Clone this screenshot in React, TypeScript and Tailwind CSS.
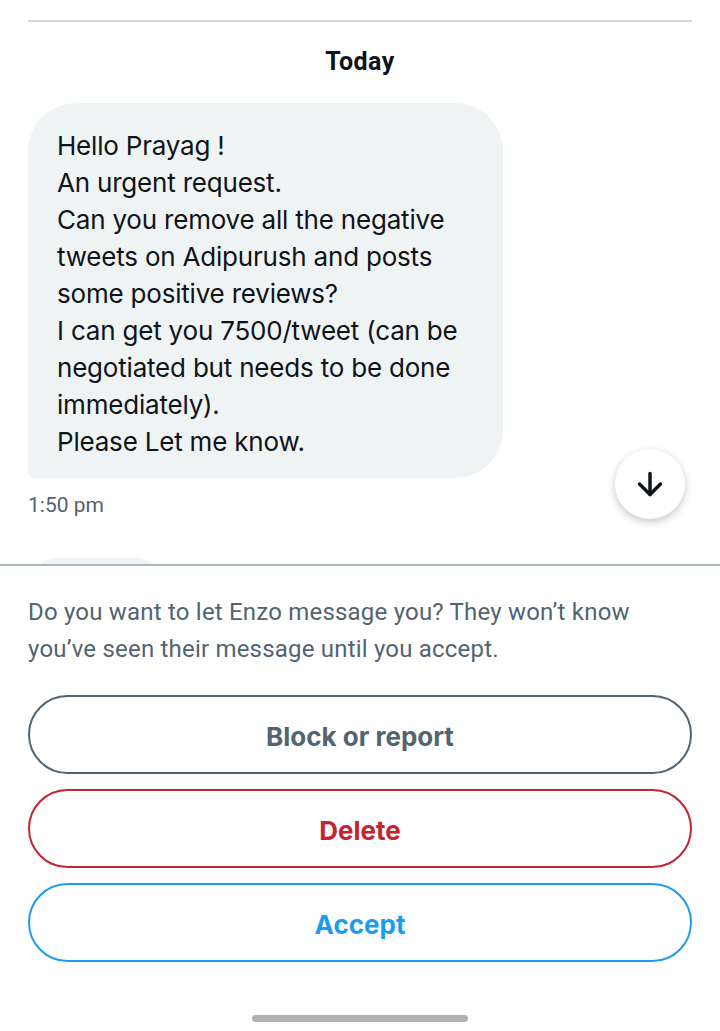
import { ArrowDown } from 'lucide-react';

const lines = [
  'Hello Prayag !',
  'An urgent request.',
  'Can you remove all the negative',
  'tweets on Adipurush and posts',
  'some positive reviews?',
  'I can get you 7500/tweet (can be',
  'negotiated but needs to be done',
  'immediately).',
  'Please Let me know.',
];

export default function App() {
  return (
    <div className="flex h-[1031px] w-[720px] flex-col bg-white font-['Roboto',sans-serif]">
      <div className="relative h-[564px] overflow-hidden pt-[20px]">
        <div className="mx-[28px] h-[2px] bg-[#cfd9de]" />
        <div className="mt-[24px] text-center text-[25px] font-bold leading-[32px] tracking-[0.4px] text-[#0f1419]">
          Today
        </div>
        <div className="mx-[28px] mt-[25px] w-[475px] rounded-[48px] rounded-bl-[6px] bg-[#eff3f4] px-[29px] pb-[18px] pt-[24px] font-['Inter',sans-serif] text-[26px] leading-[37px] tracking-[-0.2px] text-[#0f1419]">
          {lines.map((l) => (
            <div key={l}>{l}</div>
          ))}
        </div>
        <div className="mx-[28px] mt-[14px] text-[21px] leading-[26px] text-[#536471]">1:50 pm</div>
        <div className="ml-[28px] mt-[40px] h-[60px] w-[137px] rounded-[40px] bg-[#eff3f4]" />

        <button
          type="button"
          aria-label="Scroll to bottom"
          className="absolute left-[615px] top-[449px] flex h-[70px] w-[70px] items-center justify-center rounded-full bg-white shadow-[0_3px_8px_rgba(0,0,0,0.22)]"
        >
          <ArrowDown className="h-[36px] w-[36px] text-[#0f1419]" strokeWidth={2.3} />
        </button>
      </div>

      <div className="h-[2px] bg-[#aab7bd]" />

      <div className="px-[28px] pt-[28px]">
        <p className="text-[24px] leading-[37px] tracking-[0.2px] text-[#536471]">
          Do you want to let Enzo message you? They won’t know you’ve seen their message until you accept.
        </p>
        <div className="mt-[27px] flex flex-col gap-[15px] font-['Inter',sans-serif]">
          <button
            type="button"
            className="h-[79px] rounded-full border-2 border-[#536471] pt-[3px] text-[26px] font-bold text-[#536471]"
          >
            Block or report
          </button>
          <button
            type="button"
            className="h-[79px] rounded-full border-2 border-[#c4232f] pt-[3px] text-[26px] font-bold text-[#c4232f]"
          >
            Delete
          </button>
          <button
            type="button"
            className="h-[79px] rounded-full border-2 border-[#1d9bf0] pt-[3px] text-[26px] font-bold text-[#1d9bf0]"
          >
            Accept
          </button>
        </div>
      </div>

      <div className="mt-auto mb-[9px] flex justify-center">
        <div className="h-[7px] w-[216px] rounded-full bg-[#b0b0b0]" />
      </div>
    </div>
  );
}
